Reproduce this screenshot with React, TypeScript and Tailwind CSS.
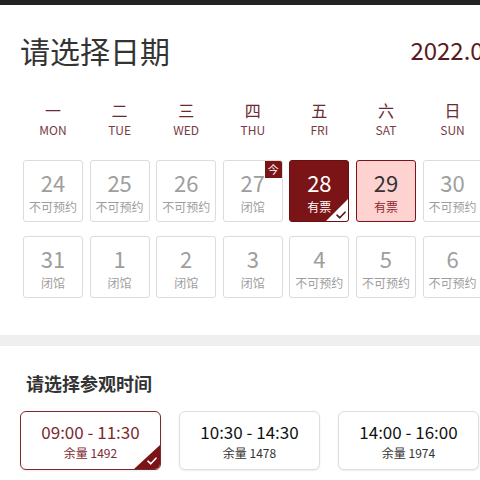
import React from 'react';

type Day = {
  num: string;
  label: string;
  kind: 'off' | 'selected' | 'available';
  today?: boolean;
};

const weekdays = [
  { cn: '一', en: 'MON' },
  { cn: '二', en: 'TUE' },
  { cn: '三', en: 'WED' },
  { cn: '四', en: 'THU' },
  { cn: '五', en: 'FRI' },
  { cn: '六', en: 'SAT' },
  { cn: '日', en: 'SUN' },
];

const days: Day[] = [
  { num: '24', label: '不可预约', kind: 'off' },
  { num: '25', label: '不可预约', kind: 'off' },
  { num: '26', label: '不可预约', kind: 'off' },
  { num: '27', label: '闭馆', kind: 'off', today: true },
  { num: '28', label: '有票', kind: 'selected' },
  { num: '29', label: '有票', kind: 'available' },
  { num: '30', label: '不可预约', kind: 'off' },
  { num: '31', label: '闭馆', kind: 'off' },
  { num: '1', label: '闭馆', kind: 'off' },
  { num: '2', label: '闭馆', kind: 'off' },
  { num: '3', label: '闭馆', kind: 'off' },
  { num: '4', label: '不可预约', kind: 'off' },
  { num: '5', label: '不可预约', kind: 'off' },
  { num: '6', label: '不可预约', kind: 'off' },
];

const slots = [
  { time: '09:00 - 11:30', left: '余量 1492', active: true },
  { time: '10:30 - 14:30', left: '余量 1478', active: false },
  { time: '14:00 - 16:00', left: '余量 1974', active: false },
];

function Check({ color }: { color: string }) {
  return (
    <svg width="10" height="8" viewBox="0 0 10 8" fill="none">
      <path d="M1 4.2 L3.8 6.8 L9 1.2" stroke={color} strokeWidth="1.6" strokeLinecap="round" strokeLinejoin="round" />
    </svg>
  );
}

function DayCell({ day }: { day: Day }) {
  const base = 'relative h-[62px] rounded-[3px] flex flex-col items-center pt-[7px] overflow-hidden';
  if (day.kind === 'selected') {
    return (
      <div className={`${base} bg-[#7b1417] border border-[#6a1013] text-white`}>
        <span className="text-[22px] leading-[28px]">{day.num}</span>
        <span className="text-[12px] leading-[16px] mt-[3px]">{day.label}</span>
        <div className="absolute right-0 bottom-0 w-0 h-0 border-l-[22px] border-l-transparent border-b-[22px] border-b-white" />
        <div className="absolute right-[2px] bottom-[2px]">
          <Check color="#5a1014" />
        </div>
      </div>
    );
  }
  if (day.kind === 'available') {
    return (
      <div className={`${base} bg-[#ffd2d2] border border-[#7b1417]`}>
        <span className="text-[22px] leading-[28px] text-[#333]">{day.num}</span>
        <span className="text-[12px] leading-[16px] mt-[3px] text-[#8a2a2e]">{day.label}</span>
      </div>
    );
  }
  return (
    <div className={`${base} bg-white border border-[#dcdcdc]`}>
      <span className="text-[22px] leading-[28px] text-[#9e9e9e]">{day.num}</span>
      <span className="text-[12px] leading-[16px] mt-[3px] text-[#9e9e9e]">{day.label}</span>
      {day.today && (
        <div className="absolute top-0 right-0 w-[17px] h-[17px] bg-[#7b1417] text-white text-[11px] leading-[17px] text-center">
          今
        </div>
      )}
    </div>
  );
}

export default function App() {
  return (
    <div
      className="w-[480px] h-[480px] overflow-hidden bg-white"
      style={{ fontFamily: '"Noto Sans CJK SC", "Noto Sans", sans-serif' }}
    >
      <div className="h-[5px] bg-[#222]" />

      <div className="flex items-center justify-between pl-[20px] pt-[20px] h-[50px] box-content whitespace-nowrap">
        <h1 className="text-[30px] leading-[40px] text-[#333] font-normal">请选择日期</h1>
        <span className="text-[24px] leading-[30px] text-[#5a1a22] mr-[-17px]">2022.01</span>
      </div>

      <div className="pl-[23px] mt-[25px] w-[490px]">
        <div className="grid grid-cols-[repeat(7,60px)] gap-x-[6.6px]">
          {weekdays.map((w) => (
            <div key={w.en} className="flex flex-col items-center">
              <span className="text-[16px] leading-[20px] text-[#6b2a30]">{w.cn}</span>
              <span className="text-[12px] leading-[16px] mt-[2px] text-[#7a3a42]">{w.en}</span>
            </div>
          ))}
        </div>

        <div className="grid grid-cols-[repeat(7,60px)] gap-x-[6.6px] gap-y-[14px] mt-[22px]">
          {days.map((d, i) => (
            <DayCell key={i} day={d} />
          ))}
        </div>
      </div>

      <div className="h-[11px] bg-[#efefef] mt-[37px]" />

      <div className="px-[20px]">
        <h2 className="text-[18px] leading-[24px] font-bold text-[#333] pl-[6px] mt-[25px]">请选择参观时间</h2>
        <div className="flex gap-[18px] mt-[16px] w-[480px]">
          {slots.map((s) => (
            <div
              key={s.time}
              className={`relative w-[141px] h-[59px] shrink-0 rounded-[6px] bg-white flex flex-col items-center justify-center overflow-hidden shadow-[0_1px_2px_rgba(0,0,0,0.08)] ${
                s.active ? 'border border-[#7b2a30]' : 'border border-[#dedede]'
              }`}
            >
              <span className={`text-[17px] leading-[22px] ${s.active ? 'text-[#7b2a30]' : 'text-[#111]'}`}>{s.time}</span>
              <span className={`text-[12px] leading-[16px] mt-[2px] ${s.active ? 'text-[#7b2a30]' : 'text-[#333]'}`}>{s.left}</span>
              {s.active && (
                <>
                  <div className="absolute right-0 bottom-0 w-0 h-0 border-l-[26px] border-l-transparent border-b-[24px] border-b-[#7b1417]" />
                  <div className="absolute right-[3px] bottom-[4px]">
                    <Check color="#ffffff" />
                  </div>
                </>
              )}
            </div>
          ))}
        </div>
      </div>
    </div>
  );
}
